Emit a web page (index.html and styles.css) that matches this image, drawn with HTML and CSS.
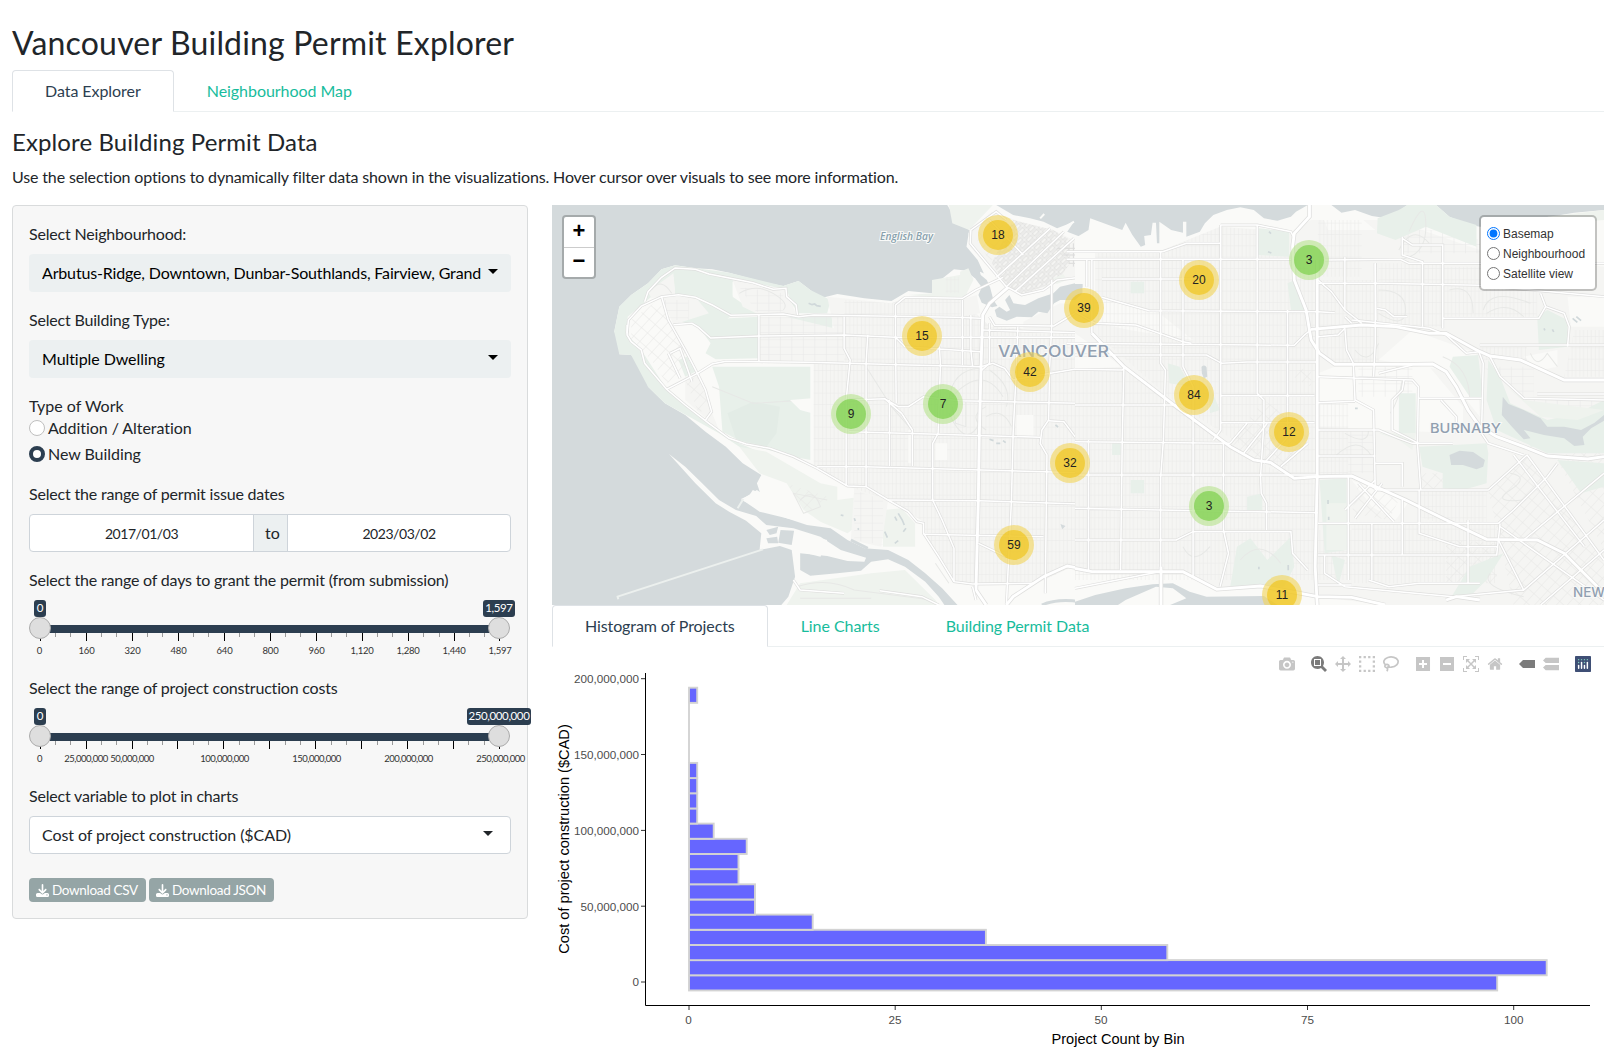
FILE: index.html
```html
<!DOCTYPE html>
<html lang="en">
<head>
<meta charset="utf-8">
<title>Vancouver Building Permit Explorer</title>
<link rel="stylesheet" href="styles.css">
</head>
<body>
<h2 class="page-title">Vancouver Building Permit Explorer</h2>
<nav class="tabs page-tabs"><a class="tab active">Data Explorer</a><a class="tab">Neighbourhood Map</a></nav>
<header class="intro">
  <h4>Explore Building Permit Data</h4>
  <p>Use the selection options to dynamically filter data shown in the visualizations. Hover cursor over visuals to see more information.</p>
</header>
<div class="layout">
  <form class="panel">
    <div class="group">
      <label>Select Neighbourhood:</label>
      <div class="picker many"><span>Arbutus-Ridge, Downtown, Dunbar-Southlands, Fairview, Grand</span><i class="caret"></i></div>
    </div>
    <div class="group">
      <label>Select Building Type:</label>
      <div class="picker"><span>Multiple Dwelling</span><i class="caret"></i></div>
    </div>
    <div class="group work">
      <div>Type of Work</div>
      <div class="option"><i class="dot"></i>Addition / Alteration</div>
      <div class="option"><i class="dot on"></i>New Building</div>
    </div>
    <div class="group">
      <label>Select the range of permit issue dates</label>
      <div class="dates"><span>2017/01/03</span><b>to</b><span>2023/03/02</span></div>
    </div>
    <div class="group">
      <label>Select the range of days to grant the permit (from submission)</label>
      <svg class="slider" width="482" height="60" viewBox="0 0 482 60">
        <rect class="bar" x="11" y="25" width="460" height="8"/>
        <path class="minor" d="M26.5 33v4M41.5 33v4M72.500 33v4M87.500 33v4M118.500 33v4M133.500 33v4M164.500 33v4M179.500 33v4M210.500 33v4M225.500 33v4M256.500 33v4M271.500 33v4M302.500 33v4M317.500 33v4M348.500 33v4M363.500 33v4M394.500 33v4M410.500 33v4M440.500 33v4M455.500 33v4"/>
        <path class="major" d="M11.500 33v8M57.500 33v8M103.500 33v8M149.500 33v8M195.500 33v8M241.500 33v8M287.500 33v8M333.500 33v8M379.500 33v8M425.500 33v8M470.500 33v8"/>
        <g class="ticks short"><text x="10.500" y="54">0</text><text x="57.500" y="54">160</text><text x="103.500" y="54">320</text><text x="149.500" y="54">480</text><text x="195.500" y="54">640</text><text x="241.500" y="54">800</text><text x="287.500" y="54">960</text><text x="333" y="54">1,120</text><text x="379" y="54">1,280</text><text x="425" y="54">1,440</text><text x="471" y="54">1,597</text></g>
        <circle class="handle" cx="11" cy="28" r="10.500"/><circle class="handle" cx="470" cy="28" r="10.500"/>
        <rect class="pill" x="5" y="0" width="12" height="17" rx="3"/><rect class="pill" x="454" y="0" width="32" height="17" rx="3"/>
        <g class="values"><text x="11" y="12">0</text><text x="470" y="12">1,597</text></g>
      </svg>
    </div>
    <div class="group">
      <label>Select the range of project construction costs</label>
      <svg class="slider" width="482" height="60" viewBox="0 0 482 60">
        <rect class="bar" x="11" y="25" width="460" height="8"/>
        <path class="minor" d="M26.5 33v4M41.5 33v4M72.500 33v4M87.500 33v4M118.500 33v4M133.500 33v4M164.500 33v4M179.500 33v4M210.500 33v4M225.500 33v4M256.500 33v4M271.500 33v4M302.500 33v4M317.500 33v4M348.500 33v4M363.500 33v4M394.500 33v4M409.500 33v4M439.500 33v4M455.500 33v4"/>
        <path class="major" d="M11.500 33v8M57.500 33v8M103.500 33v8M148.500 33v8M194.500 33v8M240.500 33v8M286.500 33v8M332.500 33v8M378.500 33v8M424.500 33v8M470.500 33v8"/>
        <g class="ticks"><text x="10.500" y="54">0</text><text x="57" y="54">25,000,000</text><text x="103" y="54">50,000,000</text><text x="195.500" y="54">100,000,000</text><text x="287.500" y="54">150,000,000</text><text x="379.500" y="54">200,000,000</text><text x="471.500" y="54">250,000,000</text></g>
        <circle class="handle" cx="11" cy="28" r="10.500"/><circle class="handle" cx="470" cy="28" r="10.500"/>
        <rect class="pill" x="5" y="0" width="12" height="17" rx="3"/><rect class="pill" x="438" y="0" width="64" height="17" rx="3"/>
        <g class="values"><text x="11" y="12">0</text><text x="470" y="12">250,000,000</text></g>
      </svg>
    </div>
    <div class="group">
      <label>Select variable to plot in charts</label>
      <div class="picker white"><span>Cost of project construction ($CAD)</span><i class="caret"></i></div>
    </div>
    <div class="buttons">
      <a class="btn"><svg width="13" height="13" viewBox="0 0 512 512"><path d="M288 32c0-17.700-14.300-32-32-32s-32 14.300-32 32v242.700l-73.400-73.400c-12.500-12.500-32.800-12.500-45.300 0s-12.500 32.800 0 45.300l128 128c12.500 12.500 32.800 12.500 45.300 0l128-128c12.500-12.500 12.500-32.800 0-45.300s-32.800-12.500-45.300 0L288 274.700V32zM64 352c-35.300 0-64 28.700-64 64v32c0 35.300 28.700 64 64 64h384c35.300 0 64-28.700 64-64v-32c0-35.300-28.700-64-64-64H346.500l-45.300 45.300c-25 25-65.500 25-90.500 0L165.500 352H64zm368 56a24 24 0 1 1 0 48 24 24 0 1 1 0-48z"/></svg><span>Download CSV</span></a>
      <a class="btn json"><svg width="13" height="13" viewBox="0 0 512 512"><path d="M288 32c0-17.700-14.300-32-32-32s-32 14.300-32 32v242.700l-73.400-73.400c-12.500-12.500-32.800-12.500-45.300 0s-12.500 32.800 0 45.300l128 128c12.500 12.500 32.800 12.500 45.300 0l128-128c12.500-12.500 12.500-32.800 0-45.300s-32.800-12.500-45.300 0L288 274.700V32zM64 352c-35.300 0-64 28.700-64 64v32c0 35.300 28.700 64 64 64h384c35.300 0 64-28.700 64-64v-32c0-35.300-28.700-64-64-64H346.500l-45.300 45.300c-25 25-65.500 25-90.500 0L165.500 352H64zm368 56a24 24 0 1 1 0 48 24 24 0 1 1 0-48z"/></svg><span>Download JSON</span></a>
    </div>
  </form>
  <main class="content">
    <div class="map">
      <svg class="basemap" width="1052" height="400" viewBox="0 0 1052 400">
        <defs>
          <pattern id="blocks" width="23" height="34" patternUnits="userSpaceOnUse"><path d="M1 0V34M12 0V34M0 1H23" class="street"/></pattern>
          <pattern id="blocksWide" width="34" height="22" patternUnits="userSpaceOnUse"><path d="M1 0V22M0 1H34" class="street"/></pattern>
          <pattern id="blocksTilt" width="24" height="34" patternUnits="userSpaceOnUse" patternTransform="rotate(42)"><path d="M1 0V34M0 1H24" class="street"/></pattern>
          <pattern id="core" width="26" height="17" patternUnits="userSpaceOnUse" patternTransform="rotate(-45)"><rect x="3" y="3" width="20" height="11" class="core-block"/></pattern>
          <g id="roadsWest">
            <path d="M280 305L290 275 330 232 370 204 430 208 470 222 560 240 600 248 660 268 698 265 700 290 728 315 732 345"/>
            <path d="M228 400L232 360 270 318 330 290 380 284 430 292 480 315 535 346 690 342 735 350 780 345 1020 349 1200 352 1275 355"/>
            <path d="M365 374L420 370 440 382 475 414 620 408 870 405 1020 412 1150 412 1275 412 1390 412 1568 412"/>
            <path d="M345 568L436 520 480 492 520 484 620 485 760 487 880 490 1060 495 1200 498 1275 500"/>
            <path d="M330 290L350 360 400 450 436 520 460 570 478 635 460 660M618 342V484"/>
            <path d="M228 375V405L240 425 270 450 280 490 345 568 400 615 470 670 530 715 580 732 650 745 720 770 790 805 880 858 935 860 1000 900 1060 935 1085 965 1105 970 1105 1000 1150 1070 1195 1145 1250 1152 1430 1150"/>
            <path d="M870 350V445L888 480 876 600V858M940 405L935 490V860M1022 412L1024 610M1022 412L1050 440 1275 455M1220 300V495M1152 440L1155 495 1148 700 1132 730V900L1160 960 1195 1045V1145"/>
            <path d="M1275 500L1310 490 1345 505 1370 540 1420 530 1568 505M1384 380L1378 540 1370 700 1365 900 1350 1215M1484 240V380L1478 500 1475 660 1455 690 1450 730 1470 765 1465 1180"/>
            <path d="M885 600L990 596 1030 620 1060 620 1105 590 1210 602 1568 610M885 695L1148 703 1450 712M790 800H930L1568 818M1000 900L1270 902 1568 912M1105 1003L1460 1010M990 596L1040 640 1072 690V798M1004 600V798M1475 662L1520 665 1568 730"/>
            <path d="M1022 412V315L1050 292 1220 295 1260 270 1340 232M1300 350L1315 376 1490 378 1568 330M1275 390L1568 398M1245 345V450L1250 500M1300 370V490L1275 512"/>
            <path d="M1245 90L1320 35 1350 60M1245 90L1243 130 1350 260M1300 60L1400 165M1350 260L1520 95M1375 275L1550 115M1320 232L1480 85M1355 262L1395 285 1460 270 1500 240 1568 232"/>
            <path d="M355 460L385 445 420 545M350 460L385 535"/>
          </g>
          <g id="mainWest">
            <path d="M1355 262L1300 310 1280 345 1275 500 1270 700 1267 900 1260 1170 1290 1215M1350 1215L1370 1190 1460 1130 1530 1098 1568 1105"/>
          </g>
          <g id="roadsEast">
            <path d="M-25 155H260L330 130H432M-25 178H640M740 180L965 178 990 190H1568M80 237H370M-25 430L540 435 650 436 680 405 705 385"/>
            <path d="M0 465H390L435 490 510 486H720M0 335L60 370 180 375 320 425 345 430M80 292L220 332 720 335 770 338M720 250H900L1200 256 1568 290"/>
            <path d="M50 180V400M35 180V260M254 155V490L268 510 262 720 254 830V1110M320 180V500L350 560V1130M432 75V690L410 720M540 75V580L560 600V665L550 830 552 880 568 910V990M630 330V680"/>
            <path d="M0 508L140 510 145 505M145 500L140 720 135 1110M40 720V1110M0 615H300M0 725L460 730M0 825H720M0 925L360 932 720 938M0 1020L300 1020 350 995H640L645 1060 690 1110M430 587H710M430 668H710M440 730V990L455 1060 430 1160"/>
            <path d="M432 75H540L640 95 650 115M800 170V330M800 385L805 450 825 490 830 600 885 630 890 870M890 190V430L885 530M720 530L1000 540 1018 560 1015 730 1025 870M720 608L830 604M720 690L900 690 960 715 1000 730H1120"/>
            <path d="M720 240L760 275 800 330 850 370M895 325L920 330 945 350H985M720 768H890M890 190L892 360M970 110V165L1030 185V380M1090 165V385M800 350L820 370M970 115L1000 135H1090V165M720 410L780 405 800 385"/>
            <path d="M1090 355H1375L1395 320 1380 280M1395 320L1450 340 1465 380 1460 440M1200 435H1568M1195 450L1210 490 1205 700 1225 730 1330 765M1230 470L1260 530 1330 595 1568 600M1370 582H1568"/>
            <path d="M820 360L1050 385 1100 405 1160 460 1200 455M900 520L1000 495M975 540L970 570 940 600V690L990 715 1018 730M1018 595H1205M1085 600L1130 650V700"/>
            <path d="M820 830L900 870 1225 870M890 790H970V860M810 830V1140M720 970H1255L1300 930 1400 830 1430 790M720 1065H1250L1260 970M880 970V1140M970 900V1065M1165 960V1150M1020 870V1000L1140 1040H1255"/>
            <path d="M1340 765L1568 1080M1300 765L1510 1040M1225 870L1340 765M1260 980L1568 1200M1255 1020L1330 1170 1568 960M1330 1020L1568 820M1120 1190L1330 1170M1380 1215L1568 1050M840 850L945 965M800 930L890 840M830 955L910 850"/>
            <path d="M740 1065V1120L800 1160 1120 1190M870 1140L930 1160 1020 1150 1200 1150M510 670L460 730M570 670L500 760M640 700L560 790M690 730L610 800M0 1165L250 1115M720 1155H820"/>
          </g>
          <g id="mainEast">
            <path d="M695 15V50L650 100 645 140 650 240 685 330 700 420 725 460 770 493H960L1060 492 1100 515 1130 560 1165 630 1200 680 1250 710 1330 740 1400 768 1520 777 1568 770"/>
            <path d="M718 180V830L712 1100 718 1215M700 388L850 375 950 380 1050 400 1100 400 1190 450 1230 468 1320 480 1450 540H1568"/>
            <path d="M50 400L145 500 300 620 460 740 530 780 580 788 650 835 720 830 820 828 980 900 1100 960 1220 1018 1370 1020 1450 1060 1568 1180"/>
            <path d="M0 1105L50 1115H320L420 1168 550 1158 720 1190 820 1192 920 1215M255 1100V1215M1100 1200L1130 1190 1200 1200"/>
          </g>
        </defs>
        <rect width="1052" height="400" class="water"/>
        <g transform="translate(-2 -5) scale(.33806 .33333)">
          <path class="land" d="M190 395L205 320 240 285 290 250 330 208 370 196 430 205 480 208 530 218 590 235 640 248 690 258 735 243 770 270 800 295 850 282 930 295 1010 303 1060 273 1130 280 1155 240 1195 208 1240 213 1262 240 1270 260 1268 300 1300 320 1320 350 1370 376 1430 360 1470 350 1490 310 1568 285 1640 300V1220H1210L1160 1165 1110 1120 1060 1080 1000 1050 930 1045 880 1020 830 985 760 975 700 955 620 935 565 897 590 885 600 870 622 880 612 850 625 825 570 790 520 740 460 695 400 645 340 610 290 560 280 510 240 465 205 463 212 425Z"/>
          <path class="land" d="M1175 15L1205 65 1240 90 1232 140 1265 180 1290 235 1320 262 1335 290 1370 280 1390 290 1440 285 1460 300 1510 258 1640 240V120L1568 110 1530 95 1550 65 1500 85 1460 65 1420 55 1370 45 1320 15Z"/>
          <path class="land" d="M352 762L400 800 450 850 500 900 550 930 610 948 640 975 720 985 800 1010 860 1050 935 1073 930 1085 880 1083 820 1068 740 1060 740 1110 770 1127 850 1120 920 1112 950 1085 1000 1078 1050 1100 1110 1145 1150 1190 1170 1220H680L705 1190 725 1130 715 1050 680 1038 620 1050 625 1000 580 962 530 935 490 910 430 850Z"/>
          <path class="park" d="M190 395L205 320 240 285 290 250 330 208 370 196 530 218 690 258 735 243 770 270 830 300 820 340 735 340 700 290 695 268 600 248 530 245 540 290 620 345 540 345 440 292 370 282 365 230 330 260 300 290 230 350 225 400 270 450 345 568 470 670 560 730 640 765 650 790 560 740 500 700 340 610 290 560 240 465 205 463Z"/>
          <path class="park" d="M370 215L470 225 540 235 540 290 560 330 520 360 440 380 370 360 450 292 410 250ZM480 500H770V780L720 770 580 732 510 695 500 560ZM440 380L530 355 618 350V475L490 478 460 460 475 430ZM698 350H835V385H698ZM380 480L405 470 430 515 400 530Z"/>
          <path class="park soft" d="M560 740L640 755 800 850 850 860 850 900 920 890V970L880 1000 800 965 750 930 700 850 620 820ZM985 930L1040 925 1080 970V1040H985ZM1190 70L1180 15H1310L1240 90ZM1470 920H1560V1020H1475ZM1480 665L1540 680 1568 740 1530 750 1460 740 1455 700ZM1290 700H1360V760H1290ZM740 1150L950 1120 1050 1110 1140 1200 1150 1215H700ZM1130 240L1240 220 1270 260 1220 300 1060 285 1130 280Z"/>
          <path class="park deep" d="M525 640L600 605 680 620 670 700 640 740 550 718ZM620 610L740 600 770 640 710 600Z"/>
          <path class="city" d="M618 350H700L840 385 820 290 1010 310 1060 290 1220 300 1270 350 1568 400V1090L1440 1150H1200L1105 1000V965L1000 900 880 858 780 800V490H618ZM540 240L700 268 728 345H620L570 320ZM290 275L365 220 370 280 300 295ZM900 860L1000 900 980 1040 890 1020ZM330 290L430 292 470 340 365 374ZM400 530L436 520 478 635 500 690 400 600Z"/>
          <path fill="url(#blocks)" d="M780 490L870 490V300L1010 310 1060 290 1220 300 1270 350 1568 400V1090L1440 1150H1200L1105 1000V965L1000 900 880 858 780 800ZM1170 230H1210V280H1170Z"/>
          <path fill="url(#blocksWide)" d="M618 350H870V490H618ZM900 870L985 900V1035L900 1020ZM330 300H410V360H350ZM560 260L690 280V335H610Z"/>
          <path fill="url(#blocksTilt)" d="M240 360L320 300 400 450 420 510 345 550 300 480 240 420ZM400 540L440 530 470 620 440 640ZM700 850L820 890 760 940Z"/>
          <path class="faint" d="M935 500L1010 620 1070 690M1180 600Q1190 510 1270 505M1190 590Q1280 490 1340 590M1290 620Q1230 650 1290 690M1230 600V680L1200 670 1190 620M1300 510Q1370 560 1350 620M1180 640Q1230 750 1270 670M1290 650Q1340 620 1365 680M560 280Q610 250 660 280T690 330M300 270Q330 230 360 280M740 900Q780 860 800 920L750 940 720 880 820 900M1140 1090L1180 1150M730 1160Q820 1130 900 1170L1130 1200M740 1195H950M480 560L600 610 770 600"/>
          <path class="land" d="M730 1000L820 1020 800 1070 720 1050ZM565 900L612 870 760 970 700 955ZM1060 690H1072V790H1060ZM1380 645H1430V710H1380ZM1140 730H1175V780H1140ZM710 600L775 595V640L740 630Z"/>
          <path class="water" d="M640 990L675 980 670 1000 650 1005ZM682 990L722 992 715 1035 675 1028ZM640 1015L672 1010 675 1030 645 1030ZM1510 972L1525 978 1515 988Z"/>
          <g transform="translate(1213 0) scale(.986 1)">
            <path class="land" d="M60 215L140 250 200 285 410 220V340L270 390 90 380 20 310 20 260Z"/>
            <path class="city" d="M30 140L25 100 95 35 180 65 300 100 400 150 400 225 350 230 290 250 180 285 130 255ZM190 365L300 310 400 320V400H190ZM0 300L50 285 60 340 0 350Z"/>
            <path fill="url(#blocksTilt)" d="M45 110L95 45 170 110 90 185Z"/>
            <path fill="url(#core)" d="M160 60L280 90 330 120 330 190 290 245 180 285 140 255 95 190Z"/>
            <path class="core-lines" d="M290 145H400M310 165H400M340 130V200M360 135V205M380 140V200M325 190H400"/>
            <path class="water" d="M35 190L55 200 62 225 80 240 90 262 100 300 112 318 96 322 65 308 55 285 65 262 45 235 20 215Z"/>
            <path class="water" d="M148 285L160 310 195 315 235 295 280 280 300 260 345 250 372 252V300L300 300 282 310 262 340 235 335 215 352 170 350 140 362 110 350 104 330 118 320 140 335 150 330 135 300Z"/>
            <path class="park soft" d="M280 235L310 222 320 240 290 252ZM0 215L25 205 40 240 20 280 0 285Z"/>
          </g>
          <path class="speck" d="M765 310l10 4 8-2 6 5 12 2M1030 940l12 20 6 15M1020 950l6 12M990 995l8 18M1045 995l8-10M1300 718l12 4M1320 730l12 0M1340 722l8 6M860 945l8 2M900 955l3 8M910 985l4 4M1495 675l8 6M1020 1030l10-8"/>
          <path class="river" d="M890 1020L940 1045M1455 1215Q1500 1195 1568 1205"/>
          <path class="jetty" d="M630 1048L200 1190 202 1198M555 925L572 897"/>
          <path class="jetty pier" d="M1500 95L1550 65M1450 55L1462 42"/>
          <use href="#roadsWest" class="casing"/><use href="#mainWest" class="casing wide"/>
          <use href="#roadsWest" class="road"/><use href="#mainWest" class="road wide"/>
          <path class="casing" d="M720 1140L740 1170 870 1180M975 1172L1100 1190 1150 1215M1250 1160L1260 1200M1267 1030L1350 1070"/>
          <path class="road" d="M720 1140L740 1170 870 1180M975 1172L1100 1190 1150 1215M1250 1160L1260 1200M1267 1030L1350 1070"/>
        </g>
        <g transform="translate(523 -5) scale(.33737 .33333)">
          <path class="land" d="M0 115L40 90 45 55 140 90 150 68 170 105 195 140 208 135 205 108 225 105 230 68 240 68 243 130 250 130 250 65 285 90 320 98V65H330V110L370 95 385 70 410 45 450 30 490 22 530 30 560 55 600 62 640 50 655 35 690 15H760L790 38 830 30 880 48 925 55 965 30 985 15H1070L1110 50 1160 72 1200 80 1400 85 1440 45 1480 38 1568 30V1220H0V275L22 262V252H0Z"/>
          <path class="city" d="M60 150L260 150 430 80 640 95 700 60 900 60 1000 80 1200 150 1568 200V1215H920L720 1190 550 1158 420 1168 320 1110H0V508L140 500 0 400V320L60 300Z"/>
          <path class="land" d="M80 290L250 340 350 420 160 390 70 370ZM0 220L40 230V250L0 250ZM770 500H1050L1150 620V700L900 690 720 680V520ZM1000 390L1190 460 1200 650 1090 510 900 480ZM1460 290H1568V380H1470ZM730 40L830 40 890 90 750 90ZM1330 470L1430 450 1430 500 1380 510ZM0 1120L240 1115V1150L0 1200ZM270 1120L420 1170 570 1160 560 1190 390 1190 300 1150ZM820 840L990 905 950 960 880 920Z"/>
          <path fill="url(#blocks)" d="M60 150H260L430 80 540 90 720 230V830L640 830 300 610 60 400ZM0 510H145L460 740 640 835H710V1100H450V990H0ZM720 240H900V490H770L720 440ZM720 60H850V230H720ZM1090 200H1370V350H1090ZM900 190H1090V380H900ZM970 1140H0V990H970ZM720 610H810V830H720ZM1020 870H1220V1015L1020 950ZM820 970H1250V1150H820ZM1200 440H1340V480H1200ZM1480 390H1568V530H1450Z"/>
          <path fill="url(#blocksWide)" d="M970 90H1120L1200 120V160H970ZM1210 500H1360V590H1330ZM1350 600H1568V630H1350ZM810 690H890V820H810ZM840 500H1000V590H840Z"/>
          <path fill="url(#blocksTilt)" d="M1225 870L1340 765 1568 1080V1215H1300ZM1430 780L1568 690V1050ZM460 730L560 600 700 700 620 810 530 780ZM840 850L960 900 930 960 820 940ZM630 520L700 500V560ZM1020 820H1090V870H1020ZM1100 1020L1250 1030V1150H1100Z"/>
          <path class="park" d="M545 85L635 95V170L540 165ZM897 55L960 30 985 15H1070L1110 50 1190 75V140L1040 80 950 120 895 100ZM1370 350L1400 330 1460 360V440L1375 450ZM960 580H1010V700L960 705ZM1120 470L1195 465 1210 600 1170 590 1110 500ZM1225 480L1260 530 1290 610 1400 660 1490 640 1568 600V760L1400 760 1250 690 1220 600ZM1020 740L1220 730 1225 760 1220 850 1150 870 1090 865V820L1030 800ZM725 840L805 835V1050L740 1060ZM480 1040L520 1015 570 1080 640 1010 650 1100 620 1160 460 1160ZM1430 780L1568 790V860L1500 880ZM1110 1200L1170 1100 1270 1060 1220 1140 1180 1180ZM275 490L310 500 345 560 280 550ZM760 1065L800 1080 780 1160ZM110 730H135V765H110ZM165 840H205V880H165ZM510 890L555 880V930H510ZM630 250L650 240 680 330H640ZM395 550L430 630 400 640ZM165 245H205V280H165ZM1330 650L1400 670 1490 700V740L1350 740Z"/>
          <path class="park soft" d="M1000 750L960 720 900 700H1010ZM745 910H810V1050H745ZM1400 50L1568 30V60L1450 70ZM1280 560L1330 600 1568 630 1490 660 1380 650Z"/>
          <path class="faint" d="M900 270Q980 270 980 330T900 340M940 180Q1040 180 1040 80T990 95M960 150Q1000 70 1050 130M1110 270Q1180 250 1180 340M1210 330Q1230 260 1350 310M1220 340Q1280 300 1330 350M490 1080Q550 1010 610 1090M320 1040Q350 1100 400 1040M970 540Q960 600 935 640M1290 820Q1350 830 1290 870T1330 900M800 700Q870 740 870 690M770 770Q840 700 880 770M1230 1120Q1200 1160 1330 1190M1350 460Q1370 510 1400 460L1430 500M900 430Q870 500 830 450M1090 470Q1170 500 1170 600"/>
          <path class="water" d="M375 500Q385 492 390 502L392 530 382 535 376 520ZM1110 765L1140 752 1180 756 1215 780 1210 800 1190 808 1150 795 1115 795ZM1268 590L1285 612 1330 630 1380 655 1400 680 1450 680 1500 690 1540 668 1568 645V662L1530 685 1505 710 1510 735 1480 738 1450 715 1390 705 1330 690 1350 715 1330 718 1295 680 1265 645ZM0 252H22V280L0 300Z"/>
          <path class="water" d="M0 1205L60 1185 150 1165 230 1153 290 1150 340 1175 390 1190 560 1188 600 1215 560 1220H270L330 1195 290 1165 240 1160 150 1200 120 1220H0Z"/>
          <path class="speck" d="M575 95l6 6M572 155l10 4M1390 385l3 6M1415 388l4 8M750 900v12M752 950v10M545 1100v8M632 1095v16M1475 355l14 12M1486 350l14 12M830 625h8"/>
          <use href="#roadsEast" class="casing"/><use href="#mainEast" class="casing wide"/>
          <use href="#roadsEast" class="road"/><use href="#mainEast" class="road wide"/>
        </g>
        <g class="places">
          <text class="bay" x="328" y="35" textLength="53" lengthAdjust="spacingAndGlyphs">English Bay</text>
          <text class="town big" x="446" y="151.500" textLength="111" lengthAdjust="spacingAndGlyphs">VANCOUVER</text>
          <text class="town" x="878" y="228" textLength="71" lengthAdjust="spacingAndGlyphs">BURNABY</text>
          <text class="town" x="1021" y="391.500">NEW</text>
        </g>
      </svg>
      <div class="zoom-control"><a>+</a><a>−</a></div>
      <div class="layers">
        <label><input type="radio" name="base" checked>Basemap</label>
        <label><input type="radio" name="base">Neighbourhood</label>
        <label><input type="radio" name="base">Satellite view</label>
      </div>
      <div class="cluster" style="left:426px;top:10px"><b>18</b></div>
      <div class="cluster" style="left:350px;top:111px"><b>15</b></div>
      <div class="cluster" style="left:458px;top:147px"><b>42</b></div>
      <div class="cluster few" style="left:279px;top:189px"><b>9</b></div>
      <div class="cluster few" style="left:371px;top:179px"><b>7</b></div>
      <div class="cluster" style="left:498px;top:238px"><b>32</b></div>
      <div class="cluster" style="left:442px;top:320px"><b>59</b></div>
      <div class="cluster" style="left:512px;top:83px"><b>39</b></div>
      <div class="cluster" style="left:627px;top:55px"><b>20</b></div>
      <div class="cluster few" style="left:737px;top:35px"><b>3</b></div>
      <div class="cluster" style="left:622px;top:170px"><b>84</b></div>
      <div class="cluster" style="left:717px;top:207px"><b>12</b></div>
      <div class="cluster few" style="left:637px;top:281px"><b>3</b></div>
      <div class="cluster" style="left:710px;top:370px"><b>11</b></div>
    </div>
    <nav class="tabs chart-tabs"><a class="tab active">Histogram of Projects</a><a class="tab">Line Charts</a><a class="tab">Building Permit Data</a></nav>
    <div class="modebar">
      <div><svg viewBox="0 0 1000 1000"><path transform="matrix(1 0 0 -1 0 850)" d="m500 450c-83 0-150-67-150-150 0-83 67-150 150-150 83 0 150 67 150 150 0 83-67 150-150 150z m400 150h-120c-16 0-34 13-39 29l-31 93c-6 15-23 28-40 28h-340c-16 0-34-13-39-28l-31-94c-6-15-23-28-40-28h-120c-55 0-100-45-100-100v-450c0-55 45-100 100-100h800c55 0 100 45 100 100v450c0 55-45 100-100 100z m-400-550c-138 0-250 112-250 250 0 138 112 250 250 250 138 0 250-112 250-250 0-138-112-250-250-250z m365 380c-19 0-35 16-35 35 0 19 16 35 35 35 19 0 35-16 35-35 0-19-16-35-35-35z"/></svg></div>
      <div>
        <svg class="on" viewBox="0 0 1000 1000"><path transform="matrix(1 0 0 -1 0 850)" d="m1000-25l-250 251c40 63 63 138 63 218 0 224-182 406-407 406-224 0-406-182-406-406s183-406 407-406c80 0 155 22 218 62l250-250 125 125z m-812 250l0 438 437 0 0-438-437 0z m62 375l313 0 0-312-313 0 0 312z"/></svg>
        <svg viewBox="0 0 1000 1000"><path transform="matrix(1 0 0 -1 0 850)" d="m1000 350l-187 188 0-125-250 0 0 250 125 0-188 187-187-187 125 0 0-250-250 0 0 125-188-188 186-187 0 125 252 0 0-250-125 0 187-188 188 188-125 0 0 250 250 0 0-126 187 188z"/></svg>
        <svg viewBox="0 0 1000 1000"><path transform="matrix(1 0 0 -1 0 850)" d="m0 850l0-143 143 0 0 143-143 0z m286 0l0-143 143 0 0 143-143 0z m285 0l0-143 143 0 0 143-143 0z m286 0l0-143 143 0 0 143-143 0z m-857-286l0-143 143 0 0 143-143 0z m857 0l0-143 143 0 0 143-143 0z m-857-285l0-143 143 0 0 143-143 0z m857 0l0-143 143 0 0 143-143 0z m-857-286l0-143 143 0 0 143-143 0z m286 0l0-143 143 0 0 143-143 0z m285 0l0-143 143 0 0 143-143 0z m286 0l0-143 143 0 0 143-143 0z"/></svg>
        <svg viewBox="0 0 1000 1000"><path class="line" d="M160 560C-30 400 40 180 300 90 560 10 850 90 930 270 1000 470 800 680 520 700 400 710 330 690 270 650M160 560C240 490 390 540 380 650 370 750 220 760 150 700 100 650 110 600 160 560M230 720C320 790 290 870 240 950"/></svg>
      </div>
      <div>
        <svg viewBox="0 0 875 1000"><path transform="matrix(1 0 0 -1 0 850)" d="m1 787l0-875 875 0 0 875-875 0z m687-500l-187 0 0-187-125 0 0 187-188 0 0 125 188 0 0 187 125 0 0-187 187 0 0-125z"/></svg>
        <svg viewBox="0 0 875 1000"><path transform="matrix(1 0 0 -1 0 850)" d="m0 788l0-876 875 0 0 876-875 0z m688-500l-500 0 0 125 500 0 0-125z"/></svg>
        <svg viewBox="0 0 1000 1000"><path transform="matrix(1 0 0 -1 0 850)" d="m250 850l-187 0-63 0 0-62 0-188 63 0 0 188 187 0 0 62z m688 0l-188 0 0-62 188 0 0-188 62 0 0 188 0 62-62 0z m-875-938l0 188-63 0 0-188 0-62 63 0 187 0 0 62-187 0z m875 188l0-188-188 0 0-62 188 0 62 0 0 62 0 188-62 0z m-125 188l-1 0-93-94-156 156 156 156 92-93 2 0 0 250-250 0 0-2 93-92-156-156-156 156 94 92 0 2-250 0 0-250 0 0 93 93 157-156-157-156-93 94 0 0 0-250 250 0 0 0-94 93 156 157 156-157-93-93 0 0 250 0 0 250z"/></svg>
        <svg viewBox="0 0 928.6 1000"><path transform="matrix(1 0 0 -1 0 850)" d="m786 296v-267q0-15-11-26t-25-10h-214v214h-143v-214h-214q-15 0-25 10t-11 26v267q0 1 0 2t0 2l321 264 321-264q1-1 1-4z m124 39l-34-41q-5-5-12-6h-2q-7 0-12 3l-386 322-386-322q-7-4-13-4-7 2-12 7l-35 41q-4 5-3 13t6 12l401 334q18 15 42 15t43-15l136-114v109q0 8 5 13t13 5h107q8 0 13-5t5-13v-227l122-102q5-5 6-12t-4-13z"/></svg>
      </div>
      <div>
        <svg class="on" viewBox="0 0 1500 1000"><path transform="matrix(1 0 0 -1 0 850)" d="m375 725l0 0-375-375 375-374 0-1 1125 0 0 750-1125 0z"/></svg>
        <svg viewBox="0 0 1125 1000"><path transform="matrix(1 0 0 -1 0 850)" d="m187 786l0 2-187-188 188-187 0 0 937 0 0 373-938 0z m0-499l0 1-187-188 188-188 0 0 937 0 0 376-938-1z"/></svg>
      </div>
      <div><svg class="logo" viewBox="0 0 132 132"><rect fill="#3f4f75" width="132" height="132" rx="6"/><g fill="#80cfbe"><circle cx="78" cy="54" r="6"/><circle cx="102" cy="30" r="6"/><circle cx="78" cy="30" r="6"/><circle cx="54" cy="30" r="6"/><circle cx="30" cy="30" r="6"/><circle cx="30" cy="54" r="6"/></g><g fill="#fff"><rect x="24" y="72" width="12" height="36" rx="6"/><rect x="72" y="72" width="12" height="36" rx="6"/><rect x="48" y="48" width="12" height="60" rx="6"/><rect x="96" y="48" width="12" height="60" rx="6"/></g></svg></div>
    </div>
    <svg class="chart" width="1052" height="374" viewBox="552 673 1052 374">
      <g class="bars" transform="translate(0 .9)">
        <rect x="689" y="974.4" width="808.2" height="15.17"/><rect x="689" y="959.200" width="857.700" height="15.17"/><rect x="689" y="944.100" width="478.300" height="15.17"/><rect x="689" y="928.900" width="296.900" height="15.17"/><rect x="689" y="913.700" width="123.700" height="15.17"/><rect x="689" y="898.600" width="66" height="15.17"/><rect x="689" y="883.400" width="66" height="15.17"/><rect x="689" y="868.200" width="49.500" height="15.17"/><rect x="689" y="853.100" width="49.500" height="15.17"/><rect x="689" y="837.900" width="57.700" height="15.17"/><rect x="689" y="822.700" width="24.700" height="15.17"/><rect x="689" y="807.500" width="8.2" height="15.17"/><rect x="689" y="792.400" width="8.2" height="15.17"/><rect x="689" y="777.200" width="8.2" height="15.17"/><rect x="689" y="762" width="8.2" height="15.17"/><rect x="689" y="686.800" width="8.2" height="15.17"/><path d="M689 701V762"/>
      </g>
      <path class="axis" d="M645.500 673V1005.500H1590"/>
      <path class="tick" d="M641 678.700h4M641 754.500h4M641 830.400h4M641 906.200h4M641 982h4M689 1006v4M895.200 1006v4M1101.300 1006v4M1307.500 1006v4M1513.700 1006v4"/>
      <g class="ylabels"><text x="639" y="683">200,000,000</text><text x="639" y="759">150,000,000</text><text x="639" y="834.500">100,000,000</text><text x="639" y="910.500">50,000,000</text><text x="639" y="986">0</text></g>
      <g class="xlabels"><text x="688.500" y="1024">0</text><text x="895" y="1024">25</text><text x="1101" y="1024">50</text><text x="1307.500" y="1024">75</text><text x="1513.700" y="1024">100</text></g>
      <g class="titles"><text x="1118" y="1044">Project Count by Bin</text><text transform="translate(569 839) rotate(-90)">Cost of project construction ($CAD)</text></g>
    </svg>
  </main>
</div>
</body>
</html>
```
FILE: styles.css
```css
* { box-sizing: border-box; }
body { margin: 0; padding: 24px 0 0 12px; height: 1047px; overflow: hidden; background: #fff; color: #212529; font: 16px/1.5 Lato, sans-serif; }
h2, h4, p { margin: 0; font-weight: 400; }
.page-title { font-size: 32px; line-height: 38px; margin-bottom: 8px; letter-spacing: .18px; }
.tabs { display: flex; height: 42px; border-bottom: 1px solid #ecf0f1; }
.tab { height: 42px; padding: 8px 32px; border: 1px solid transparent; border-radius: 4px 4px 0 0; color: #18bc9c; letter-spacing: -.05px; }
.tab.active { color: #2c3e50; background: #fff; border-color: #dee2e6 #dee2e6 #fff; }
.chart-tabs .active { letter-spacing: -.1px; }
.intro { padding-top: 15px; height: 93px; }
.intro h4 { font-size: 24px; line-height: 29px; margin-bottom: 9px; letter-spacing: .11px; }
.intro p { letter-spacing: -.147px; }
.layout { display: grid; grid-template-columns: 516px 1052px; column-gap: 24px; align-items: start; }
.panel { height: 714px; padding: 16px; background: #f7f7f7; border: 1px solid #d9dbdc; border-radius: 4px; }
.group { margin-bottom: 16px; }
.group > label { display: block; margin-bottom: 8px; letter-spacing: -.19px; }
.picker { display: flex; align-items: center; justify-content: space-between; height: 38px; padding: 0 13px; border-radius: 4px; background: #ecf0f1; color: #000; letter-spacing: -.07px; }
.picker span { width: 444px; overflow: hidden; white-space: nowrap; }
.picker.many { letter-spacing: -.155px; }
.picker.white { background: #fff; border: 1px solid #ced4da; color: #212529; padding: 0 17px 0 12px; }
.picker.white span { width: auto; }
.caret { border: 5px solid transparent; border-top-color: currentColor; border-bottom: 0; margin-top: -3px; }
.work { height: 72px; }
.option { display: flex; align-items: center; height: 24px; margin-top: -2px; letter-spacing: -.05px; }
.option + .option { margin-top: 2px; }
.dot { width: 16px; height: 16px; margin: 0 3px 0 0; border: 1px solid #bfbfbf; border-radius: 50%; background: #fff; }
.dot.on { border: 4.500px solid #2c3e50; }
.dates { display: grid; grid-template-columns: 223px 35px 1fr; height: 38px; background: #fff; border: 1px solid #ced4da; border-radius: 4px; line-height: 38px; text-align: center; }
.dates span { font-size: 14px; letter-spacing: -.45px; }
.dates b { font-weight: 400; line-height: 36px; height: 36px; padding-left: 4px; background: #ecf0f1; border: solid #ced4da; border-width: 0 1px; }
.slider { display: block; overflow: visible; }
.bar, .pill { fill: #2c3e50; }
.minor { stroke: #999; }
.major { stroke: #000; }
.handle { fill: #dedede; stroke: #ababab; }
.ticks, .values { text-anchor: middle; fill: #333; }
.ticks { font-size: 9.500px; letter-spacing: -.48px; }
.ticks.short { letter-spacing: -.25px; }
.values { font-size: 11.500px; letter-spacing: -.4px; fill: #fff; }
.buttons { display: flex; gap: 3px; margin-top: 24px; }
.btn { display: flex; align-items: center; gap: 3px; width: 117px; height: 24px; padding-left: 7px; border-radius: 4px; background: #95a5a6; color: #fff; font-size: 13.500px; letter-spacing: -.32px; white-space: nowrap; }
.btn.json { width: 125px; }
.btn path { fill: #fff; }
.content { position: relative; }
.map { position: relative; height: 400px; overflow: hidden; font-family: "Liberation Sans", Arial, sans-serif; }
.basemap { display: block; }
.water { fill: #d4dadc; }
.land { fill: #fafaf8; }
.city { fill: #f5f5f3; }
.park { fill: #e8f0ea; }
.park.soft { fill: #eff3ee; }
.park.deep { fill: #e3ece6; }
.street { stroke: #e8e8e7; stroke-width: 1.8; }
.core-block { fill: #f4f4f2; stroke: #dadad9; stroke-width: 2.500; }
.core-lines { fill: none; stroke: #dcdcdb; stroke-width: 3; }
.faint { fill: none; stroke: #e7e8e6; stroke-width: 3; }
.speck { fill: none; stroke: #d0d8da; stroke-width: 5; }
.river { fill: none; stroke: #d4dadc; stroke-width: 9; }
.jetty { fill: none; stroke: #ecf0ee; stroke-width: 6; }
.jetty.pier { stroke: #fafaf8; }
.casing { fill: none; stroke: #dfdfde; stroke-width: 8.5; }
.road { fill: none; stroke: #fff; stroke-width: 4.500; }
.casing.wide { stroke-width: 13; }
.road.wide { stroke-width: 8.500; }
.places text { stroke: #f8f9f8; stroke-width: 2px; paint-order: stroke; }
.bay { font: italic 600 10px "Open Sans", sans-serif; fill: #88a1ad; }
.town { font: 500 13.500px Inter, sans-serif; fill: #919fb0; }
.town.big { font-size: 16px; }
.zoom-control { position: absolute; left: 10px; top: 10px; width: 34px; border: 2px solid rgba(0,0,0,.22); border-radius: 4px; background: #fff; background-clip: padding-box; }
.zoom-control a { display: block; height: 30px; font: bold 22px/27px "Liberation Sans", sans-serif; text-align: center; color: #000; }
.zoom-control a + a { border-top: 1px solid #ccc; line-height: 25px; }
.layers { position: absolute; right: 7px; top: 10px; width: 118px; height: 76px; padding: 7px 6px; border: 2px solid rgba(0,0,0,.22); border-radius: 5px; background: #fff; background-clip: padding-box; font-size: 12px; color: #333; }
.layers label { display: flex; align-items: center; height: 20px; white-space: nowrap; }
.layers input { width: 13px; height: 13px; margin: -2px 3px 0 0; }
.cluster { position: absolute; width: 40px; height: 40px; padding: 5px; border-radius: 50%; background: rgba(241,211,87,.6); }
.cluster b { display: block; height: 30px; border-radius: 50%; background: rgba(240,194,12,.6); font: 12px/30px "Liberation Sans", sans-serif; text-align: center; color: #222; }
.cluster.few { background: rgba(181,226,140,.6); }
.cluster.few b { background: rgba(110,204,57,.6); }
.modebar { position: absolute; right: 13px; top: 451px; display: flex; gap: 16px; }
.modebar div { display: flex; gap: 8px; }
.modebar svg { display: block; width: 16px; height: 16px; fill: #c6c6c6; }
.modebar svg.on { fill: #7b7b7b; }
.modebar .line { fill: none; stroke: #c6c6c6; stroke-width: 105; }
.chart { display: block; margin-top: 26px; font-family: "Liberation Sans", Arial, sans-serif; }
.bars { fill: #66f; stroke: #d3d3d3; stroke-width: 1.9; }
.axis { fill: none; stroke: #000; stroke-width: 1; }
.tick { stroke: #333; stroke-width: 1; }
.ylabels, .xlabels { font-size: 11.700px; fill: #4d4d4d; text-anchor: end; }
.xlabels { text-anchor: middle; }
.titles { font-size: 14.600px; text-anchor: middle; fill: #000; }
```
